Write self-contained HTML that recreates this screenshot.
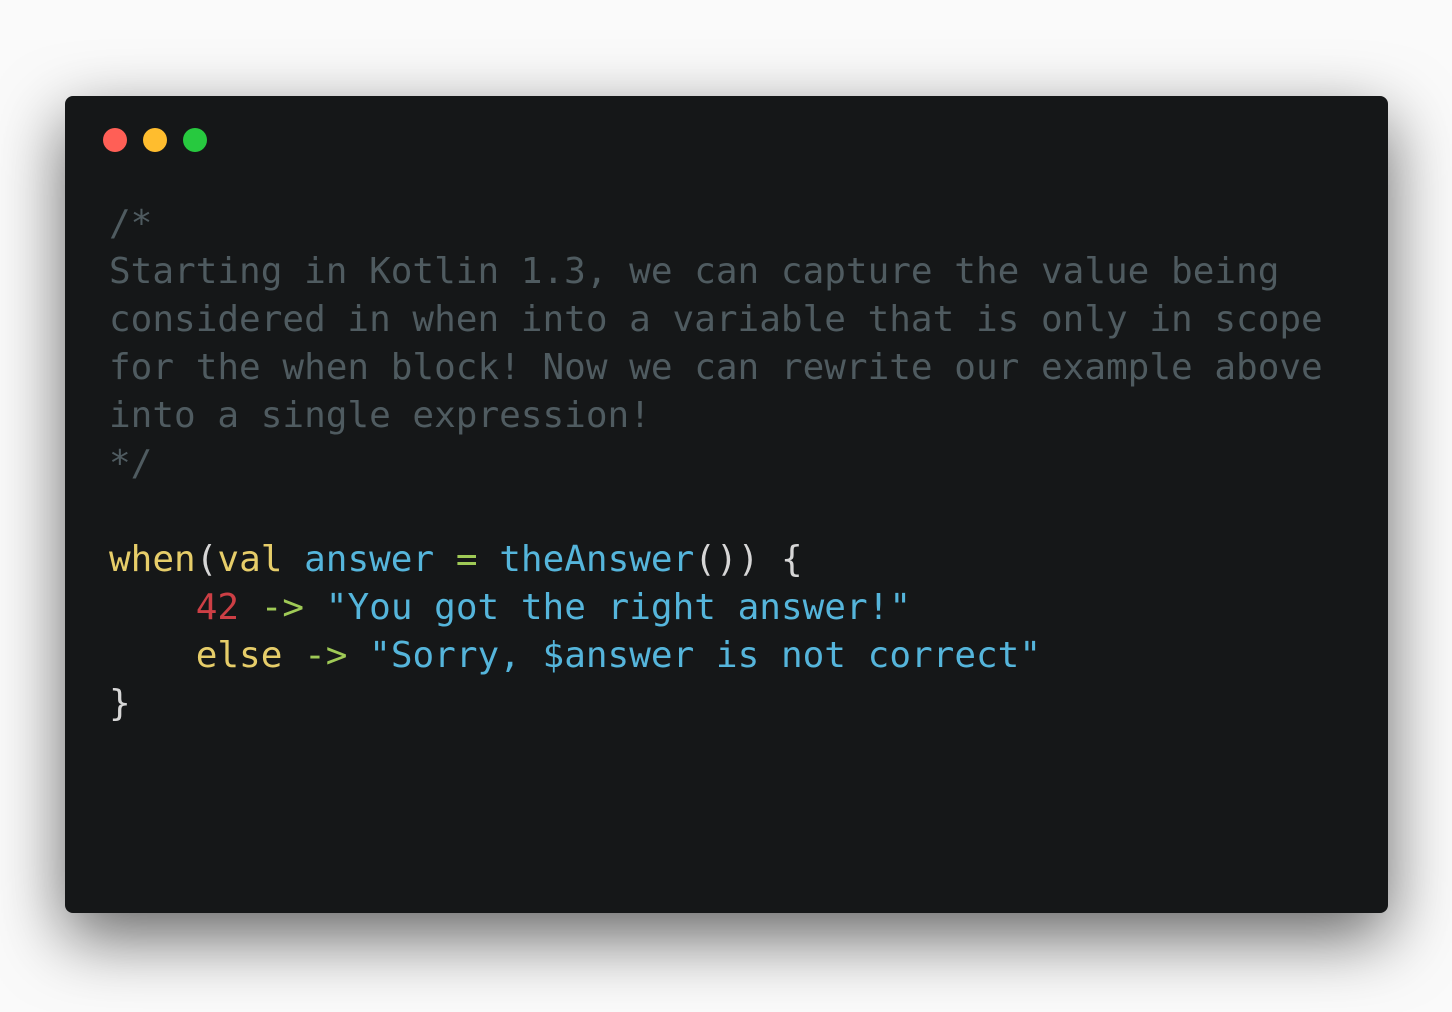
<!DOCTYPE html>
<html><head><style>
html,body{margin:0;padding:0;width:1452px;height:1012px;background:#fafafa;overflow:hidden}
.win{position:absolute;left:65px;top:96px;width:1323px;height:817px;background:#151718;border-radius:8px;box-shadow:0 24px 68px rgba(0,0,0,0.6)}
.dot{position:absolute;top:32px;width:24px;height:24px;border-radius:50%}
pre{position:absolute;left:44px;top:104px;margin:0;font-family:"DejaVu Sans Mono","Liberation Mono",monospace;font-size:36px;line-height:48px;color:#d6d6d6}
.c{color:#4f5b60}.y{color:#e6cd69}.b{color:#55b5db}.g{color:#9fca56}.r{color:#cd3f45}
</style></head><body>
<div class="win">
<div class="dot" style="left:38px;background:#ff5f56"></div>
<div class="dot" style="left:78px;background:#ffbd2e"></div>
<div class="dot" style="left:118px;background:#27c93f"></div>
<pre><span class="c">/*
Starting in Kotlin 1.3, we can capture the value being
considered in when into a variable that is only in scope
for the when block! Now we can rewrite our example above
into a single expression!
*/</span>

<span class="y">when</span>(<span class="y">val</span> <span class="b">answer</span> <span class="g">=</span> <span class="b">theAnswer</span>()) {
    <span class="r">42</span> <span class="g">-&gt;</span> <span class="b">"You got the right answer!"</span>
    <span class="y">else</span> <span class="g">-&gt;</span> <span class="b">"Sorry, $answer is not correct"</span>
}</pre>
</div>
</body></html>
